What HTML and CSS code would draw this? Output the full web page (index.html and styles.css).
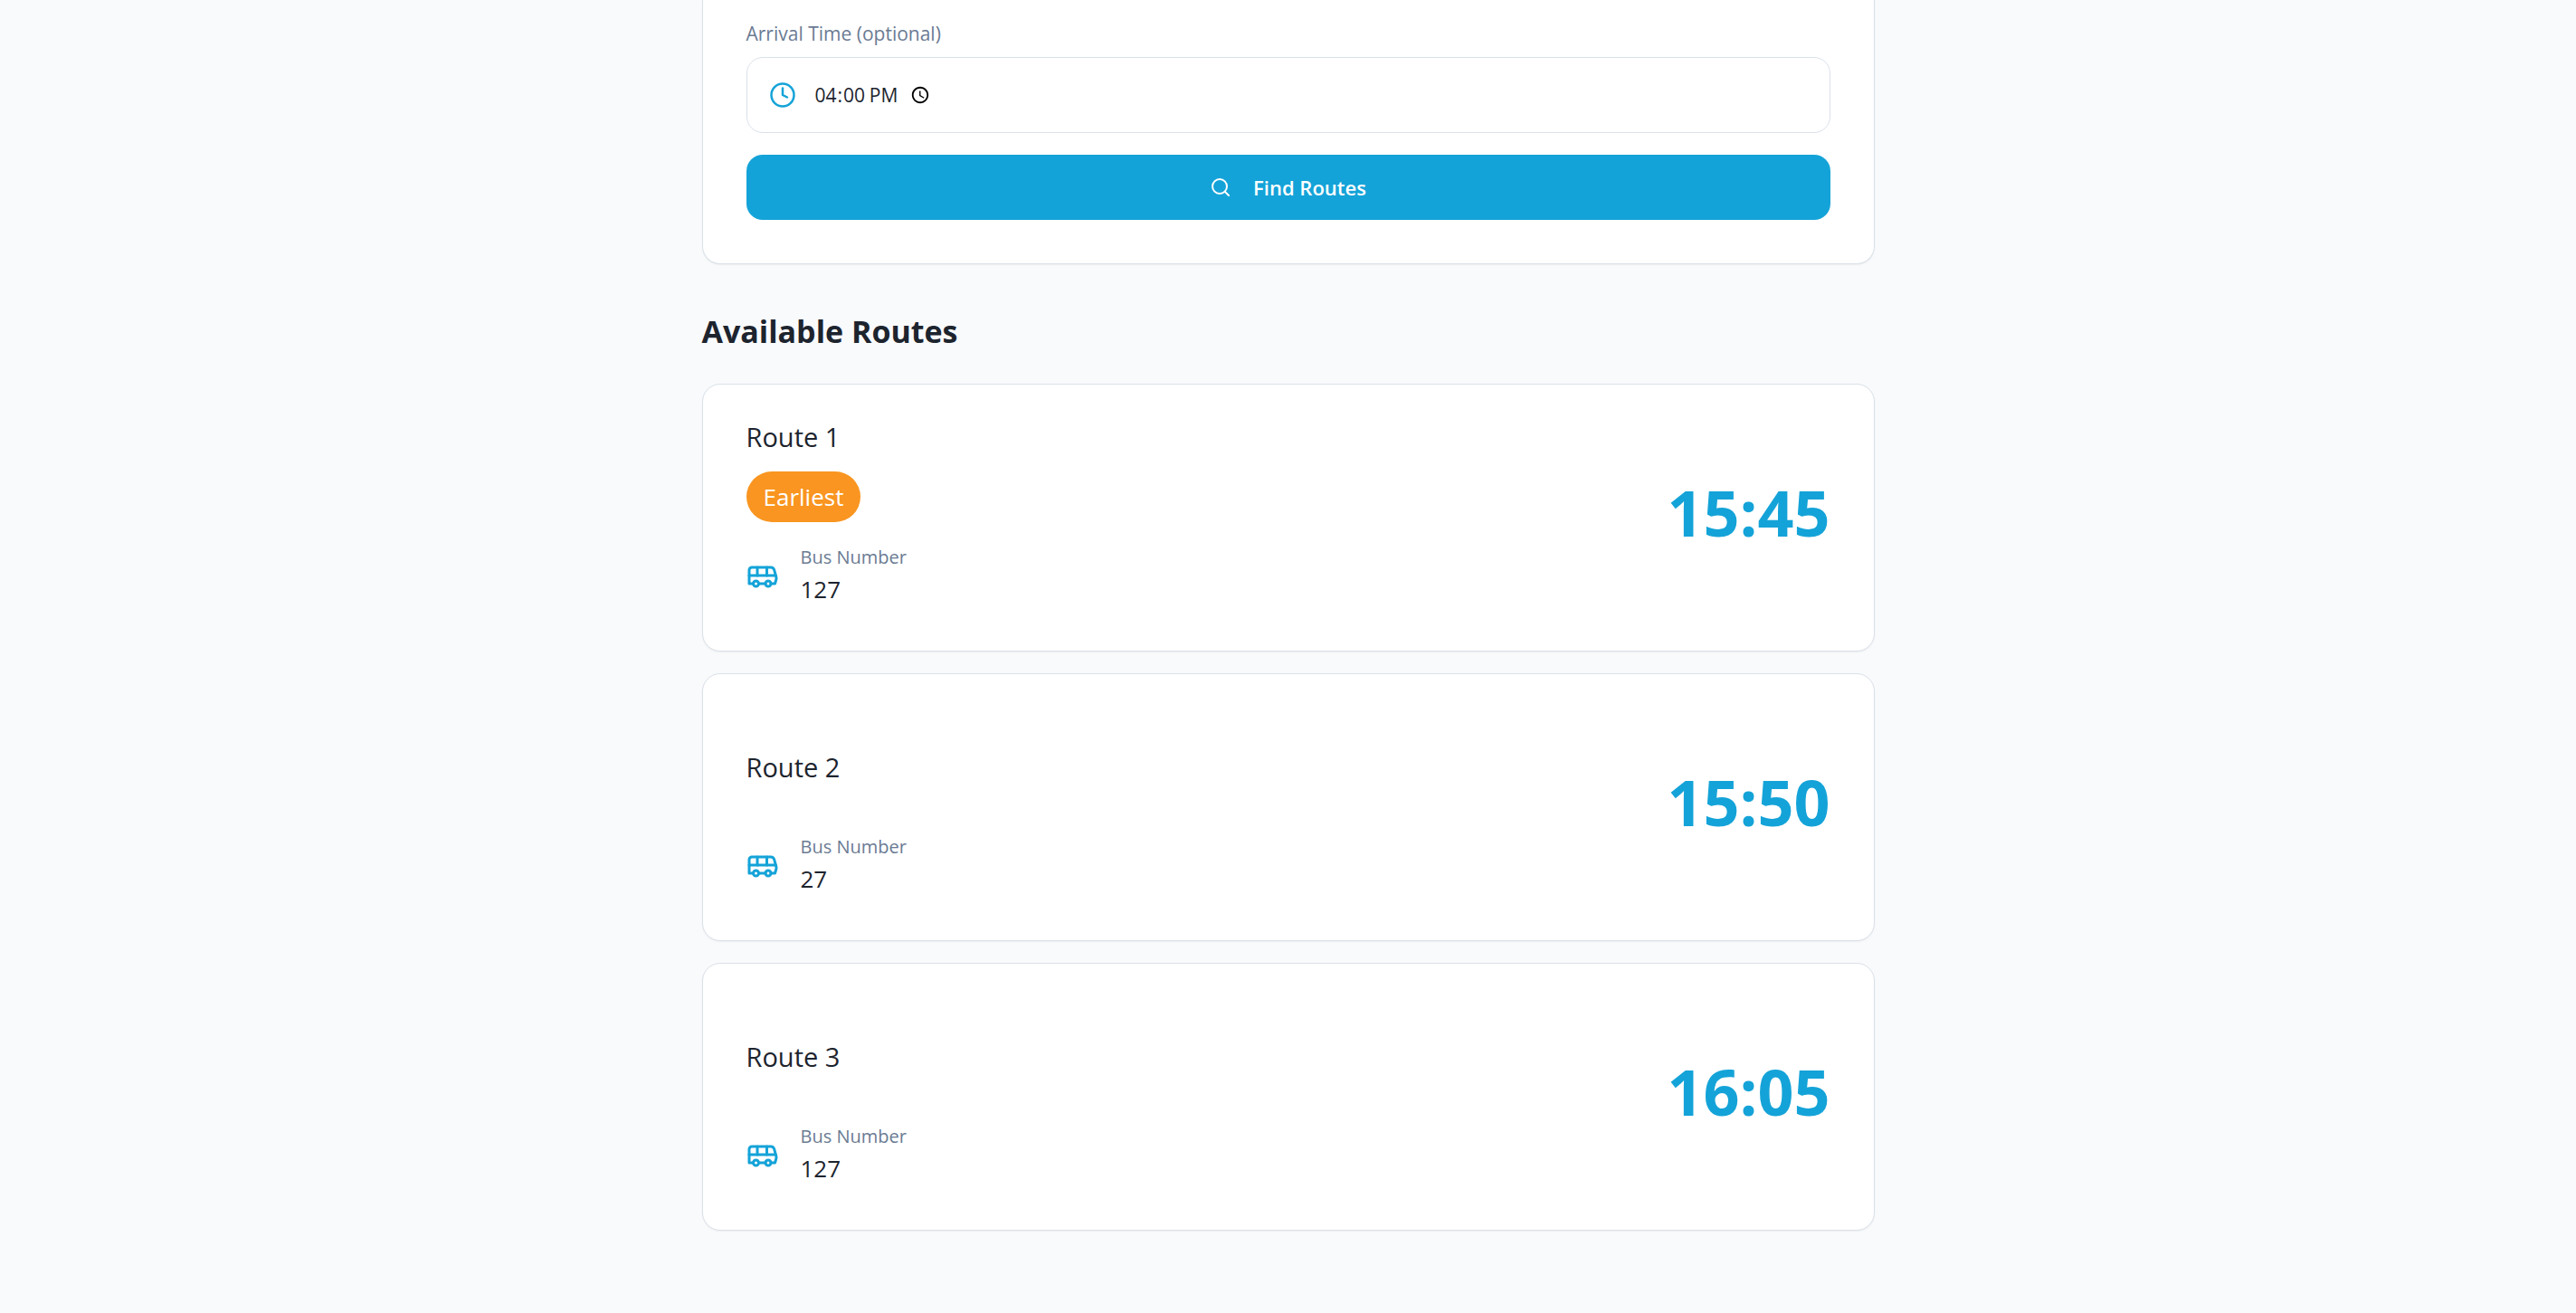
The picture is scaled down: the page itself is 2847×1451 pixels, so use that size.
FILE: index.html
```html
<!DOCTYPE html>
<html lang="en">
<head>
    <meta charset="UTF-8">
    <meta name="viewport" content="width=device-width, initial-scale=1.0">
    <title>Find Routes</title>
    <link rel="stylesheet" href="styles.css">
</head>
<body>
    <!-- Icon shapes shared by the page -->
    <svg class="sprite" aria-hidden="true">
        <symbol id="icon-bus" viewBox="0 0 24 24">
            <path d="M8 6v6"/>
            <path d="M15 6v6"/>
            <path d="M2 12h19.600"/>
            <path d="M18 18h3s.5-1.700.8-2.800c.1-.4.2-.8.2-1.200 0-.4-.1-.8-.2-1.200l-1.400-5C20.100 6.800 19.100 6 18 6H4a2 2 0 0 0-2 2v10h3"/>
            <circle cx="7" cy="18" r="2"/>
            <path d="M9 18h5"/>
            <circle cx="16" cy="18" r="2"/>
        </symbol>
    </svg>

    <main class="page">
        <form class="card search-card">
            <label for="arrival">Arrival Time (optional)</label>
            <div class="time-field">
                <svg class="icon-clock" viewBox="0 0 24 24">
                    <circle cx="12" cy="12" r="10"/>
                    <polyline points="12 6 12 12 16 14"/>
                </svg>
                <input type="time" id="arrival" value="16:00">
            </div>
            <button type="button" class="find-button">
                <svg class="icon-search" viewBox="0 0 24 24">
                    <circle cx="11" cy="11" r="8"/>
                    <path d="m21 21-4.300-4.300"/>
                </svg>
                Find Routes
            </button>
        </form>

        <h2>Available Routes</h2>

        <section class="routes">
            <article class="card route">
                <div class="route-info">
                    <div class="route-head">
                        <h3>Route 1</h3>
                        <span class="badge">Earliest</span>
                    </div>
                    <div class="bus">
                        <svg class="icon-bus"><use href="#icon-bus"/></svg>
                        <div>
                            <p class="bus-label">Bus Number</p>
                            <p class="bus-number">127</p>
                        </div>
                    </div>
                </div>
                <p class="time">15:45</p>
            </article>

            <article class="card route">
                <div class="route-info">
                    <div class="route-head">
                        <h3>Route 2</h3>
                    </div>
                    <div class="bus">
                        <svg class="icon-bus"><use href="#icon-bus"/></svg>
                        <div>
                            <p class="bus-label">Bus Number</p>
                            <p class="bus-number">27</p>
                        </div>
                    </div>
                </div>
                <p class="time">15:50</p>
            </article>

            <article class="card route">
                <div class="route-info">
                    <div class="route-head">
                        <h3>Route 3</h3>
                    </div>
                    <div class="bus">
                        <svg class="icon-bus"><use href="#icon-bus"/></svg>
                        <div>
                            <p class="bus-label">Bus Number</p>
                            <p class="bus-number">127</p>
                        </div>
                    </div>
                </div>
                <p class="time">16:05</p>
            </article>
        </section>
    </main>
</body>
</html>
```
FILE: styles.css
```css
* {
    box-sizing: border-box;
}
body {
    font-family: 'Segoe UI', 'Open Sans', 'Noto Sans', sans-serif;
    margin: 0;
    background-color: #f9fafc;
    color: #1d242e;
}
h2, h3, p {
    margin: 0;
}
svg {
    fill: none;
    stroke: currentColor;
    stroke-width: 2;
    stroke-linecap: round;
    stroke-linejoin: round;
    flex-shrink: 0;
}
.sprite {
    display: none;
}
.page {
    max-width: 1296px;
    margin: 0 auto;
    padding-bottom: 90px;
}
.card {
    background-color: #fff;
    border: 1px solid #dae1e9;
    border-radius: 20px;
    box-shadow: 0 1px 2px rgba(0, 0, 0, 0.05);
}

/* Search form */
.search-card {
    display: flex;
    flex-direction: column;
    padding: 24px 48px 48px;
    border-top: none;
    border-radius: 0 0 20px 20px;
}
.search-card label {
    font-size: 21px;
    line-height: 27px;
    margin-bottom: 12px;
    color: #6b7b93;
}
.time-field {
    display: flex;
    align-items: center;
    gap: 20px;
    height: 84px;
    padding: 0 24px;
    margin-bottom: 24px;
    border: 1px solid #dae1e9;
    border-radius: 18px;
}
.time-field input {
    border: none;
    outline: none;
    padding: 0;
    background: transparent;
    font-family: inherit;
    font-size: 21px;
    color: #1d242e;
}
.find-button {
    display: flex;
    align-items: center;
    justify-content: center;
    gap: 24px;
    height: 72px;
    border: none;
    border-radius: 18px;
    background-color: #14a3d8;
    color: #fff;
    font-family: inherit;
    font-size: 22px;
    font-weight: 600;
    cursor: pointer;
}
.icon-clock {
    width: 30px;
    height: 30px;
    color: #14a3d8;
}
.icon-search {
    width: 24px;
    height: 24px;
}

/* Route list */
h2 {
    font-size: 34px;
    line-height: 48px;
    margin: 50px 0 34px;
}
.routes {
    display: flex;
    flex-direction: column;
    gap: 24px;
}
.route {
    display: flex;
    justify-content: space-between;
    align-items: center;
    padding: 36px 48px 48px;
}
.route-head {
    display: flex;
    flex-direction: column;
    justify-content: center;
    align-items: flex-start;
    min-height: 134px;
    margin-bottom: 6px;
}
h3 {
    font-size: 29px;
    font-weight: 500;
    line-height: 42px;
}
.badge {
    margin: 17px 0 18px;
    padding: 0 19px;
    border-radius: 28px;
    background-color: #f99520;
    color: #fff;
    font-size: 26px;
    font-weight: 500;
    line-height: 56px;
}
.bus {
    display: flex;
    align-items: center;
    gap: 24px;
}
.icon-bus {
    width: 36px;
    height: 36px;
    color: #14a3d8;
}
.bus-label {
    font-size: 20px;
    line-height: 30px;
    color: #6b7b93;
}
.bus-number {
    font-size: 26px;
    font-weight: 500;
    line-height: 40px;
}
.time {
    font-size: 70px;
    font-weight: 700;
    line-height: 72px;
    color: #14a3d8;
}
```
